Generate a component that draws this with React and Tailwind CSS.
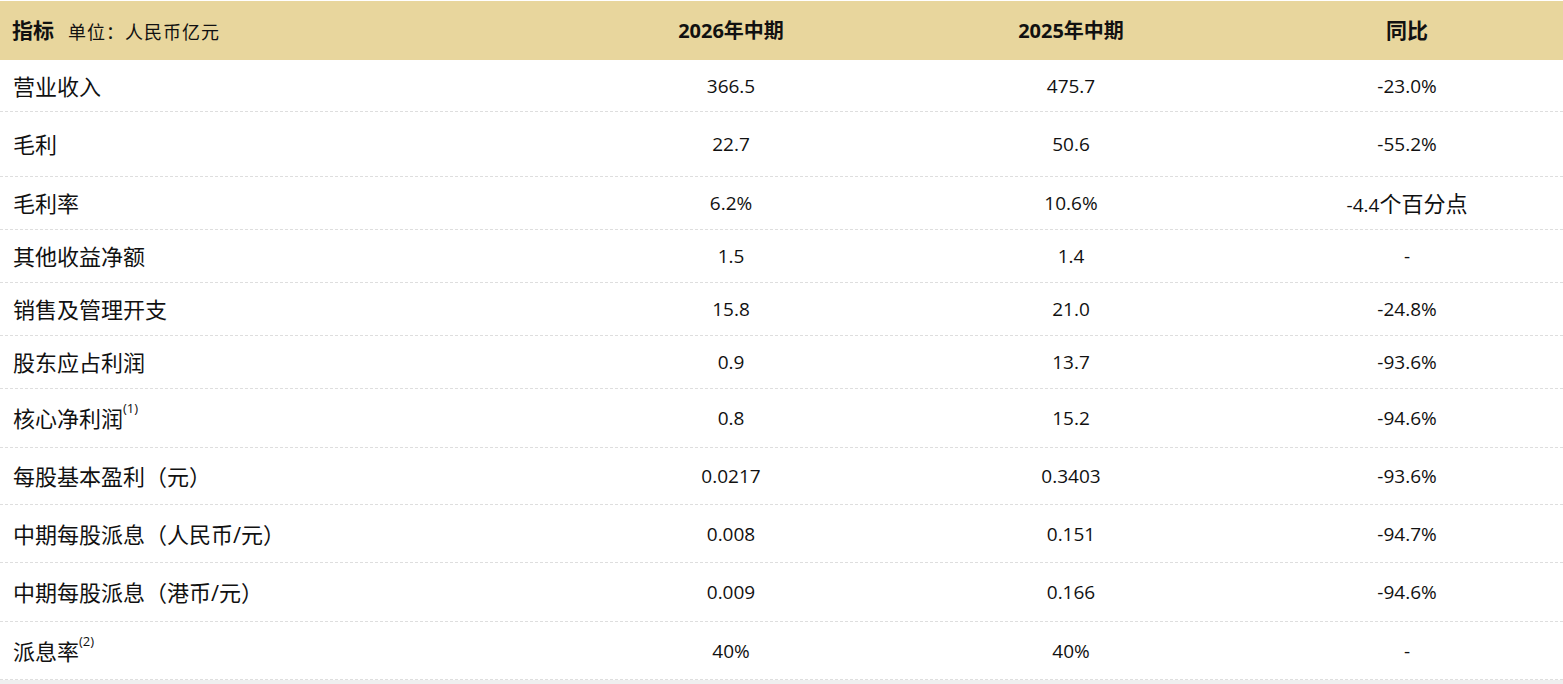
import React from "react";

const rows = [
  { label: "营业收入", a: "366.5", b: "475.7", c: "-23.0%", h: "h-[52px]" },
  { label: "毛利", a: "22.7", b: "50.6", c: "-55.2%", h: "h-[65px]" },
  { label: "毛利率", a: "6.2%", b: "10.6%", c: "-4.4", cSuffix: "个百分点", h: "h-[53px]" },
  { label: "其他收益净额", a: "1.5", b: "1.4", c: "-", h: "h-[53px]" },
  { label: "销售及管理开支", a: "15.8", b: "21.0", c: "-24.8%", h: "h-[53px]" },
  { label: "股东应占利润", a: "0.9", b: "13.7", c: "-93.6%", h: "h-[53px]" },
  { label: "核心净利润", sup: "(1)", a: "0.8", b: "15.2", c: "-94.6%", h: "h-[59px]" },
  { label: "每股基本盈利（元）", a: "0.0217", b: "0.3403", c: "-93.6%", h: "h-[57px]" },
  { label: "中期每股派息（人民币/元）", a: "0.008", b: "0.151", c: "-94.7%", h: "h-[58px]" },
  { label: "中期每股派息（港币/元）", a: "0.009", b: "0.166", c: "-94.6%", h: "h-[59px]" },
  { label: "派息率", sup: "(2)", a: "40%", b: "40%", c: "-", h: "h-[58px]" },
];

const font = "font-['Open_Sans','Noto_Sans_CJK_SC',sans-serif]";

export default function App() {
  return (
    <div className={`w-[1563px] h-[684px] bg-white pt-[1px] text-[#111] ${font}`}>
      <div className="grid grid-cols-[561px_340px_340px_1fr] h-[59px] bg-[#e8d69d] items-center">
        <div className="pl-[12px] flex items-center">
          <span className="text-[21px] font-bold text-[#111]">指标</span>
          <span className="ml-[14px] text-[18px] mt-[3px] tracking-[1px]">单位：人民币亿元</span>
        </div>
        <div className="text-center text-[20px] font-bold text-[#111]">2026年中期</div>
        <div className="text-center text-[20px] font-bold text-[#111]">2025年中期</div>
        <div className="text-center pl-[10px] text-[21px] font-bold text-[#111]">同比</div>
      </div>
      {rows.map((r, i) => (
        <div
          key={i}
          className={`grid grid-cols-[561px_340px_340px_1fr] items-center border-b border-dashed border-[#dedede] ${r.h}`}
        >
          <div className="pl-[13px] text-[22px] leading-none flex items-start">
            <span>{r.label}</span>
            <span className="text-[13px] -mt-[5px]">{r.sup}</span>
          </div>
          <div className="text-center text-[19px] pt-[1px]">{r.a}</div>
          <div className="text-center text-[19px] pt-[1px]">{r.b}</div>
          <div className="text-center pl-[10px] text-[19px] pt-[1px]">
            {r.c}
            {r.cSuffix && <span className="text-[22px]">{r.cSuffix}</span>}
          </div>
        </div>
      ))}
      <div className="h-[4px] bg-[#efefef]" />
    </div>
  );
}
